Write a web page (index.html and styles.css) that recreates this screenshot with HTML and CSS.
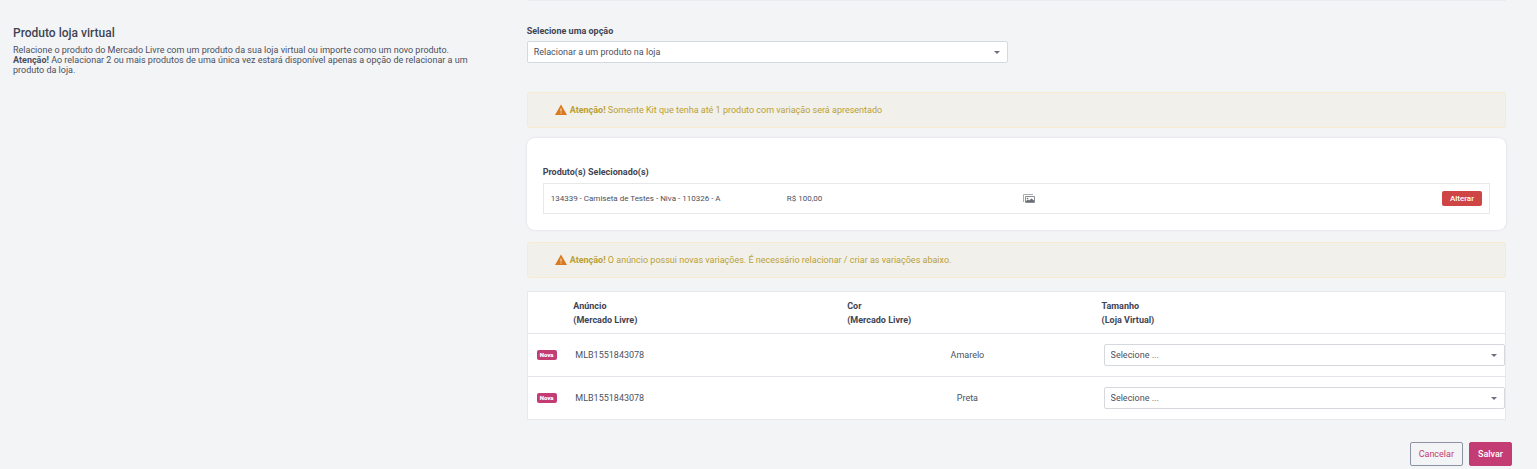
FILE: index.html
```html
<!DOCTYPE html>
<html lang="pt-br">
<head>
    <meta charset="UTF-8">
    <title>Produto loja virtual</title>
    <link rel="stylesheet" href="styles.css">
</head>
<body>
    <form class="page">
        <div class="grid">
            <div class="previous-card"></div>

            <div class="intro">
                <h3>Produto loja virtual</h3>
                <p>
                    Relacione o produto do Mercado Livre com um produto da sua loja virtual ou importe como um novo produto.<br>
                    <strong>Atenção!</strong> Ao relacionar 2 ou mais produtos de uma única vez estará disponível apenas a opção de relacionar a um produto da loja.
                </p>
            </div>

            <div class="content">
                <div class="field">
                    <label for="opcao">Selecione uma opção</label>
                    <select id="opcao" class="select">
                        <option>Relacionar a um produto na loja</option>
                    </select>
                </div>

                <div class="alert">
                    <svg class="alert-icon" viewBox="0 0 24 24"><path fill="currentColor" d="M0 22h24L12 1 0 22z"/><path fill="#f2f0eb" d="M11 9h2v6h-2zM11 17h2v2h-2z"/></svg>
                    <p><strong>Atenção!</strong> Somente Kit que tenha até 1 produto com variação será apresentado</p>
                </div>

                <div class="card">
                    <h4>Produto(s) Selecionado(s)</h4>
                    <table class="selected">
                        <tr>
                            <td>134339 - Camiseta de Testes - Niva - 110326 - A</td>
                            <td>R$ 100,00</td>
                            <td>
                                <svg class="image-icon" viewBox="0 0 12 10"><path fill="none" stroke="#a9acb2" d="M.5 8V.5H10"/><path fill="#fff" stroke="#8b8e94" d="M2.500 2.500h9v6h-9z"/><path fill="#6b6e75" d="M3 8V7l2-1.500 1 1L8.500 4.500 11 6.500V8z"/><circle cx="4.500" cy="4.500" r=".8" fill="#6b6e75"/></svg>
                            </td>
                            <td class="actions"><button type="button" class="btn-danger">Alterar</button></td>
                        </tr>
                    </table>
                </div>

                <div class="alert">
                    <svg class="alert-icon" viewBox="0 0 24 24"><path fill="currentColor" d="M0 22h24L12 1 0 22z"/><path fill="#f2f0eb" d="M11 9h2v6h-2zM11 17h2v2h-2z"/></svg>
                    <p><strong>Atenção!</strong> O anúncio possui novas variações. É necessário relacionar / criar as variações abaixo.</p>
                </div>

                <table class="variations">
                    <thead>
                        <tr>
                            <th class="col-badge"></th>
                            <th class="col-ad">Anúncio<br>(Mercado Livre)</th>
                            <th class="col-color">Cor<br>(Mercado Livre)</th>
                            <th class="col-size">Tamanho<br>(Loja Virtual)</th>
                        </tr>
                    </thead>
                    <tbody>
                        <tr>
                            <td><span class="badge">Nova</span></td>
                            <td class="ad">MLB1551843078</td>
                            <td class="color">Amarelo</td>
                            <td class="size">
                                <select class="select" aria-label="Tamanho da variação Amarelo">
                                    <option>Selecione ...</option>
                                </select>
                            </td>
                        </tr>
                        <tr>
                            <td><span class="badge">Nova</span></td>
                            <td class="ad">MLB1551843078</td>
                            <td class="color">Preta</td>
                            <td class="size">
                                <select class="select" aria-label="Tamanho da variação Preta">
                                    <option>Selecione ...</option>
                                </select>
                            </td>
                        </tr>
                    </tbody>
                </table>
            </div>
        </div>

        <div class="footer">
            <button type="button" class="btn btn-outline">Cancelar</button>
            <button type="submit" class="btn btn-primary">Salvar</button>
        </div>
    </form>
</body>
</html>
```
FILE: styles.css
```css
* {
    box-sizing: border-box;
}

body {
    margin: 0;
    background: #f3f4f6;
    color: #4b5060;
    font-family: Roboto, sans-serif;
    font-size: 9px;
    line-height: 14px;
}

h3, h4, p {
    margin: 0;
}

button, select {
    font-family: inherit;
    color: inherit;
}

.grid {
    display: grid;
    grid-template-columns: 1fr 2fr;
    column-gap: 24px;
    padding: 0 31px 0 13px;
}

/* bottom edge of the card above */
.previous-card {
    grid-column: 2;
    height: 1px;
    background: #eaebef;
    border-radius: 0 0 8px 8px;
}

.intro {
    grid-column: 1;
    padding: 24px 24px 0 0;
}

.intro h3 {
    margin-bottom: 4px;
    color: #3f4454;
    font-size: 12px;
    font-weight: 500;
    line-height: 16px;
}

.intro p {
    line-height: 10px;
}

.content {
    padding-top: 23px;
}

.field {
    width: 50%;
    padding-right: 8px;
    margin-bottom: 29px;
}

.field label {
    display: block;
    margin-bottom: 3px;
    color: #3f4454;
    font-weight: 700;
}

.select {
    display: block;
    width: 100%;
    height: 22px;
    padding: 0 20px 0 6px;
    border: 1px solid #d5d9de;
    border-radius: 2px;
    appearance: none;
    background: #fff url("data:image/svg+xml,%3Csvg xmlns='http://www.w3.org/2000/svg' viewBox='0 0 6 3'%3E%3Cpath fill='%236b7080' d='M0 0h6L3 3z'/%3E%3C/svg%3E") no-repeat right 7px center / 6px 3px;
    font-size: 9px;
}

.alert {
    display: flex;
    align-items: center;
    gap: 3px;
    padding: 10px 27px;
    border: 1px solid #f7ead2;
    border-radius: 3px;
    background: #f2f0eb;
    color: #b9a036;
}

.alert-icon {
    width: 12px;
    height: 12px;
    color: #d97a21;
}

.card {
    margin: 10px 0 12px;
    padding: 27px 16px 16px;
    border-radius: 8px;
    background: #fff;
    box-shadow: 0 0 2px 1px #e6e7ec;
}

.card h4 {
    margin-bottom: 4px;
    color: #3f4454;
    font-size: 9px;
}

table {
    width: 100%;
    border-collapse: collapse;
    table-layout: fixed;
}

.selected {
    border: 1px solid #e8e8ea;
    font-size: 8px;
}

.selected td {
    height: 30px;
    padding: 0 7px;
}

.selected .actions {
    text-align: right;
}

.image-icon {
    display: block;
    width: 12px;
    height: 10px;
}

.btn-danger {
    height: 15px;
    padding: 0 8px;
    border: 0;
    border-radius: 2px;
    background: #cf4444;
    color: #fff;
    font-size: 8px;
    font-weight: 500;
}

.variations {
    margin-top: 13px;
    border: 1px solid #e8e9ed;
    background: #fff;
}

.variations th {
    height: 42px;
    padding: 0 7px;
    color: #3f4454;
    text-align: left;
}

.variations td {
    height: 43px;
    padding: 0 9px;
    border-top: 1px solid #e4e5ea;
}

.col-badge { width: 4%; }
.col-ad { width: 28%; }
.col-color { width: 26%; }
.col-size { width: 42%; }

.variations .color {
    text-align: center;
}

.variations .size {
    padding-right: 0;
}

.badge {
    display: block;
    width: 20px;
    border-radius: 2px;
    background: #c43c74;
    color: #fff;
    font-size: 6px;
    font-weight: 900;
    line-height: 10px;
    text-align: center;
}

.footer {
    display: flex;
    justify-content: flex-end;
    gap: 6px;
    padding: 22px 25px 2px;
}

.btn {
    height: 24px;
    padding: 0 8px;
    border: 1px solid #c43c74;
    border-radius: 2px;
    font-size: 9px;
}

.btn-outline {
    border-color: #8d93a3;
    background: transparent;
    color: #c43c74;
}

.btn-primary {
    background: #c43c74;
    color: #fff;
    font-weight: 500;
}
```
